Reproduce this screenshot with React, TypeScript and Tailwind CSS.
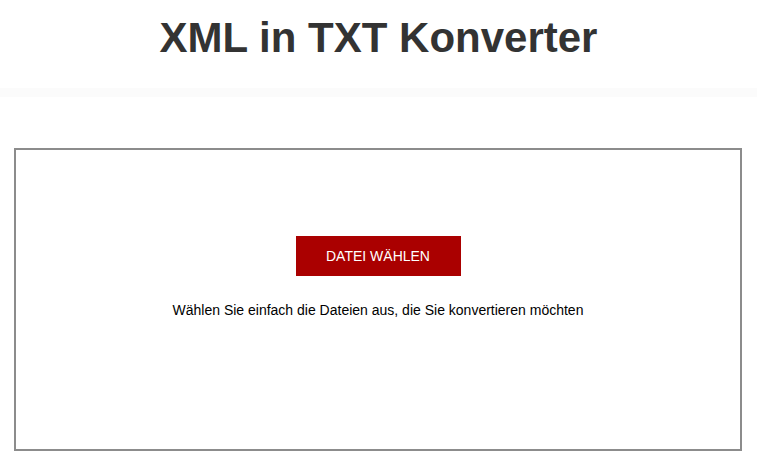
export default function App() {
  return (
    <div className="min-h-screen bg-white font-['Liberation_Sans',Arial,sans-serif]">
      <header className="bg-white">
        <div className="h-[88px] flex justify-center pt-[12px]">
          <h1 className="text-[42px] leading-[52px] font-bold text-[#333333]">XML in TXT Konverter</h1>
        </div>
        <div className="h-[9px] bg-[#fbfbfb]" />
      </header>
      <main className="pl-[14px] pr-[15px] pt-[51px]">
        <div className="h-[303px] border-2 border-[#8c8c8c] flex flex-col items-center pt-[86px]">
          <button className="w-[165px] h-[40px] bg-[#aa0000] text-white text-[14px] uppercase">
            Datei wählen
          </button>
          <p className="mt-[24px] text-[14px] leading-[20px] text-black">
            Wählen Sie einfach die Dateien aus, die Sie konvertieren möchten
          </p>
        </div>
      </main>
    </div>
  )
}
